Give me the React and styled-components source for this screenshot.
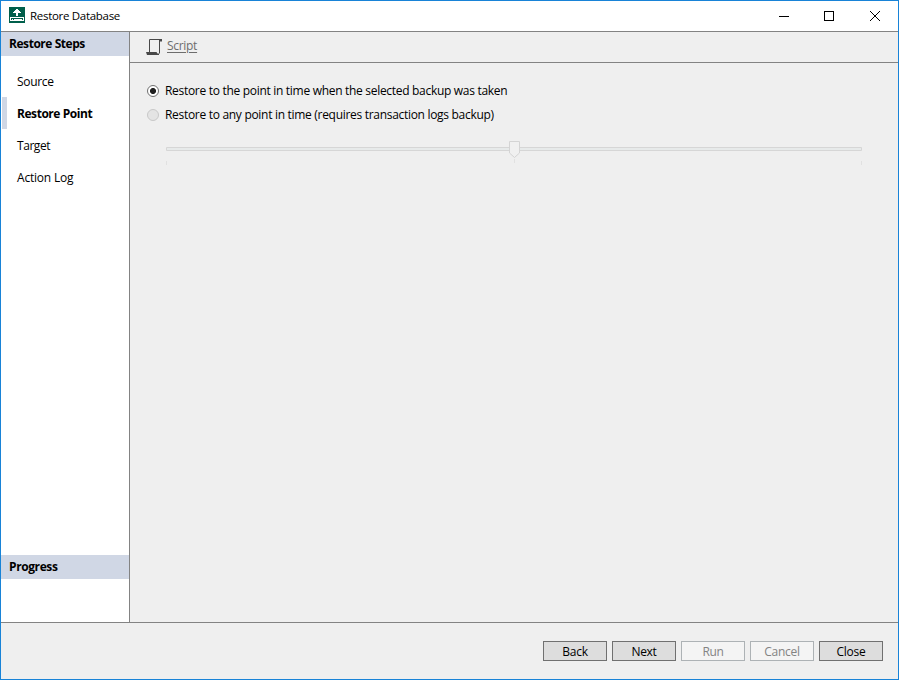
import React, { useState } from 'react';
import styled, { createGlobalStyle } from 'styled-components';

const COLORS = {
  frame: '#1883d7',
  line: '#838383',
  panel: '#efefef',
  band: '#d0d7e5',
  text: '#000000',
  muted: '#6d6d6d',
};

const GlobalStyle = createGlobalStyle`
  * {
    margin: 0;
    padding: 0;
    box-sizing: border-box;
  }

  body {
    font-family: 'Open Sans', 'Noto Sans', sans-serif;
    font-size: 12px;
    line-height: 16px;
    color: ${COLORS.text};
    overflow: hidden;
  }
`;

const Window = styled.div`
  width: 899px;
  height: 680px;
  display: flex;
  flex-direction: column;
  border: 1px solid ${COLORS.frame};
  background: ${COLORS.panel};
`;

const Text = styled.span`
  white-space: nowrap;
  letter-spacing: ${(props) => props.$spacing || -0.3}px;
`;

const TitleBar = styled.header`
  height: 31px;
  display: flex;
  align-items: center;
  padding-left: 8px;
  background: #fff;
  border-bottom: 1px solid ${COLORS.line};
`;

const AppIcon = styled.svg`
  width: 16px;
  height: 16px;
  margin-top: -2px;
  margin-right: 5px;
`;

const Title = styled.h1`
  flex: 1;
  display: flex;
  font-size: 11.5px;
  font-weight: 400;
`;

const WindowButton = styled.button`
  width: ${(props) => props.$width || 46}px;
  height: 29px;
  display: flex;
  align-items: center;
  justify-content: center;
  border: none;
  background: transparent;
`;

const Body = styled.div`
  height: 591px;
  display: flex;
  border-bottom: 1px solid ${COLORS.line};
`;

const Sidebar = styled.aside`
  width: 129px;
  display: flex;
  flex-direction: column;
  background: #fff;
  border-right: 1px solid ${COLORS.line};
`;

const SectionTitle = styled.h2`
  height: 24px;
  display: flex;
  align-items: center;
  padding-left: 8px;
  background: ${COLORS.band};
  font-size: 12px;
  font-weight: 700;
`;

const Steps = styled.ul`
  flex: 1;
  padding-top: 9px;
  list-style: none;
`;

const Step = styled.li`
  height: 32px;
  display: flex;
  align-items: center;
  margin-left: 1px;
  padding: 2px 0 0 10px;
  border-left: 5px solid ${(props) => (props.$active ? COLORS.band : '#fff')};
  font-weight: ${(props) => (props.$active ? 700 : 400)};
  cursor: pointer;
`;

const ProgressArea = styled.div`
  height: 43px;
`;

const Content = styled.main`
  flex: 1;
`;

const Toolbar = styled.div`
  height: 31px;
  display: flex;
  align-items: center;
  padding: 0 0 2px 16px;
  border-bottom: 1px solid ${COLORS.line};
`;

const ScriptIcon = styled.svg`
  width: 17px;
  height: 18px;
  margin-top: 2px;
  margin-right: 4px;
`;

const ScriptLink = styled.a`
  display: flex;
  color: ${COLORS.muted};
  text-decoration: underline;
  text-underline-offset: 2px;
`;

const Options = styled.div`
  padding: 16px 0 0 17px;
`;

const Option = styled.label`
  height: 24px;
  display: flex;
  align-items: center;
  gap: 6px;
`;

const Radio = styled.input`
  appearance: none;
  width: 12px;
  height: 12px;
  border: 1px solid ${(props) => (props.disabled ? '#c8c8c8' : '#707070')};
  border-radius: 50%;
  background: ${(props) => (props.disabled ? '#e4e4e4' : '#fff')};

  &:checked {
    background: radial-gradient(circle, #212121 0 2.7px, #fff 3.3px);
  }
`;

const Slider = styled.svg`
  display: block;
  width: 698px;
  height: 28px;
  margin: 12px 0 0 19px;
`;

const Footer = styled.footer`
  flex: 1;
  display: flex;
  align-items: flex-start;
  justify-content: flex-end;
  gap: 5px;
  padding: 18px 15px 0 0;
`;

const Button = styled.button`
  width: 64px;
  height: 20px;
  display: flex;
  align-items: center;
  justify-content: center;
  padding-top: 2px;
  border: 1px solid #707070;
  background: #dddddd;
  color: ${COLORS.text};
  font: inherit;

  &:disabled {
    border-color: #adb2b5;
    background: #f4f4f4;
    color: #838383;
  }
`;

const steps = [
  { name: 'Source' },
  { name: 'Restore Point', spacing: -0.45 },
  { name: 'Target', spacing: -0.45 },
  { name: 'Action Log', spacing: -0.2 },
];

const buttons = [
  { label: 'Back' },
  { label: 'Next' },
  { label: 'Run', disabled: true },
  { label: 'Cancel', disabled: true },
  { label: 'Close' },
];

const App = () => {
  const [step, setStep] = useState('Restore Point');

  return (
    <>
      <GlobalStyle />
      <Window>
        <TitleBar>
          <AppIcon viewBox='0 0 16 16' shapeRendering='crispEdges'>
            <path fill='#005f4b' d='M0 0h16v16H0z' />
            <path fill='#fff' d='M7 2h2v1h1v1h1v1h1v1H9v3H7V6H4V5h1V4h1V3h1z' />
            <path fill='none' stroke='#fff' d='M1.5 10.5h13v3h-13z' />
            <path fill='#fff' d='M3 12h1v1H3zM5 12h8v1H5z' />
          </AppIcon>
          <Title>
            <Text>Restore Database</Text>
          </Title>
          <WindowButton $width={44} aria-label='Minimize'>
            <svg width='10' height='11' shapeRendering='crispEdges'>
              <path d='M0 5.5h10' stroke='#000' />
            </svg>
          </WindowButton>
          <WindowButton aria-label='Maximize'>
            <svg width='10' height='10' shapeRendering='crispEdges'>
              <path d='M.5.5h9v9h-9z' fill='none' stroke='#000' />
            </svg>
          </WindowButton>
          <WindowButton aria-label='Close window'>
            <svg width='10' height='10'>
              <path d='M0 0l10 10M10 0L0 10' stroke='#000' />
            </svg>
          </WindowButton>
        </TitleBar>

        <Body>
          <Sidebar>
            <SectionTitle>
              <Text $spacing={-0.45}>Restore Steps</Text>
            </SectionTitle>
            <Steps>
              {steps.map(({ name, spacing }) => (
                <Step
                  key={name}
                  $active={name === step}
                  onClick={() => setStep(name)}
                >
                  <Text $spacing={spacing}>{name}</Text>
                </Step>
              ))}
            </Steps>
            <SectionTitle>
              <Text $spacing={-0.4}>Progress</Text>
            </SectionTitle>
            <ProgressArea />
          </Sidebar>

          <Content>
            <Toolbar>
              <ScriptIcon viewBox='0 0 17 18' fill='none' stroke='#484848'>
                <path d='M3.5 14V1.5H15M13.5 2v13.5' />
                <path d='M13 1h3v2.5h-3z' fill='#484848' stroke='none' />
                <path d='M0 14h10.5l1 1.5H13V17H1z' fill='#484848' stroke='none' />
              </ScriptIcon>
              <ScriptLink>
                <Text>Script</Text>
              </ScriptLink>
            </Toolbar>

            <Options>
              <Option>
                <Radio type='radio' name='point' defaultChecked />
                <Text>
                  Restore to the point in time when the selected backup was
                  taken
                </Text>
              </Option>
              <Option>
                <Radio type='radio' name='point' disabled />
                <Text $spacing={-0.3}>
                  Restore to any point in time (requires transaction logs
                  backup)
                </Text>
              </Option>
              <Slider viewBox='0 0 698 28'>
                <path d='M.5 8.5h695v3H.5z' fill='#e7eaea' stroke='#d6d6d6' />
                <path
                  d='M343.5 2.5h10v11.5l-5 4.5-5-4.5z'
                  fill='#f0f0f0'
                  stroke='#d4d4d4'
                />
                <path
                  d='M.5 22v4M348.5 20v4M695.5 22v4'
                  stroke='#e1e1e1'
                />
              </Slider>
            </Options>
          </Content>
        </Body>

        <Footer>
          {buttons.map(({ label, disabled }) => (
            <Button key={label} disabled={disabled}>
              <Text>{label}</Text>
            </Button>
          ))}
        </Footer>
      </Window>
    </>
  );
};

export default App;
